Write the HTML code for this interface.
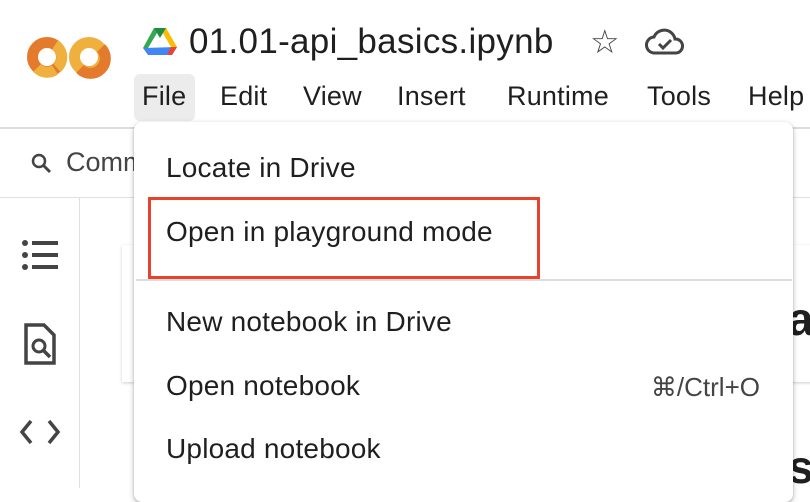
<!DOCTYPE html>
<html><head><meta charset="utf-8"><style>
body{margin:0;width:810px;height:488px;overflow:hidden;background:#fff;font-family:"Liberation Sans",sans-serif;color:#1f1f1f;position:relative}
.a{position:absolute;white-space:nowrap}
.menu{position:absolute;left:134px;top:122px;width:659px;height:380px;background:#fff;border-radius:8px;box-shadow:0 2px 6px rgba(0,0,0,.25),0 1px 2px rgba(0,0,0,.15)}
.mi{position:absolute;left:32px;font-size:28px;color:#1f1f1f;letter-spacing:0.2px}
.mn{position:absolute;top:81px;font-size:27px;letter-spacing:0.2px}
</style></head><body>
<svg class="a" style="left:24px;top:34px" width="88" height="48" viewBox="0 0 88 48">
<circle cx="23" cy="23" r="14.5" fill="none" stroke="#e37a2c" stroke-width="11"/>
<path d="M31 11A14.5 14.5 0 0 1 33 34" fill="none" stroke="#f0b03d" stroke-width="11"/>
<path d="M31 36A14.5 14.5 0 0 1 13 34" fill="none" stroke="#f0b03d" stroke-width="11"/>
<circle cx="65" cy="23" r="14.5" fill="none" stroke="#f0b03d" stroke-width="11"/>
<path d="M77 14A14.5 14.5 0 0 1 56 35" fill="none" stroke="#e37a2c" stroke-width="11"/>
</svg>
<svg class="a" style="left:143px;top:28px" width="34" height="28" viewBox="0 0 34 28">
<polygon points="11,0 17,0 5,20 0,20" fill="#34a853"/>
<polygon points="17,0 23,0 34,19 28,19" fill="#fbbc04"/>
<polygon points="11,0 23,0 17,10" fill="#1e8e3e"/>
<polygon points="0,20 34,19 29,27 5,27" fill="#4285f4"/>
<polygon points="28,19 34,19 29,27 24,27" fill="#ea4335"/>
</svg>
<div class="a" style="left:189px;top:22px;font-size:35px;letter-spacing:0.3px;color:#1f1f1f">01.01-api_basics.ipynb</div>
<div class="a" style="left:590px;top:22px;font-size:33px;color:#444">☆</div>
<svg class="a" style="left:645px;top:28px" width="40" height="28" viewBox="0 0 40 28"><path d="M10 25a8 8 0 0 1-1-16 11 11 0 0 1 21 2 7 7 0 0 1 1 14z" fill="none" stroke="#444" stroke-width="3"/><path d="M14 16l4 4 8-8" fill="none" stroke="#444" stroke-width="3"/></svg>
<div class="a" style="left:134px;top:74px;width:61px;height:47px;background:#ececec;border-radius:6px"></div>
<div class="mn" style="left:142px">File</div>
<div class="mn" style="left:220px">Edit</div>
<div class="mn" style="left:303px">View</div>
<div class="mn" style="left:397px">Insert</div>
<div class="mn" style="left:507px">Runtime</div>
<div class="mn" style="left:647px">Tools</div>
<div class="mn" style="left:748px">Help</div>
<div class="a" style="left:0;top:127px;width:810px;height:2px;background:#dcdcdc"></div>
<div class="a" style="left:0;top:197px;width:810px;height:1px;background:#e0e0e0"></div>
<svg class="a" style="left:30px;top:152px" width="24" height="24" viewBox="0 0 24 24"><circle cx="9" cy="9" r="6" fill="none" stroke="#444" stroke-width="2.5"/><path d="M13.5 13.5L20 20" stroke="#444" stroke-width="3"/></svg>
<div class="a" style="left:66px;top:147px;font-size:27px;color:#444">Comm</div>
<div class="a" style="left:79px;top:197px;width:1px;height:291px;background:#e0e0e0"></div>
<svg class="a" style="left:20px;top:238px" width="40" height="36" viewBox="0 0 40 36"><g fill="#444"><circle cx="5" cy="5" r="3"/><circle cx="5" cy="17" r="3"/><circle cx="5" cy="29" r="3"/><rect x="12" y="3" width="26" height="4"/><rect x="12" y="15" width="26" height="4"/><rect x="12" y="27" width="26" height="4"/></g></svg>
<svg class="a" style="left:22px;top:322px" width="36" height="44" viewBox="0 0 36 44"><path d="M4 3h18l10 10v28H4z" fill="none" stroke="#444" stroke-width="3.5"/><circle cx="17" cy="24" r="6" fill="none" stroke="#444" stroke-width="3"/><path d="M21 28l7 7" stroke="#444" stroke-width="3.5"/></svg>
<svg class="a" style="left:19px;top:418px" width="42" height="28" viewBox="0 0 42 28"><path d="M12 3L3 14l9 11M30 3l9 11-9 11" fill="none" stroke="#444" stroke-width="3.5"/></svg>
<div class="a" style="left:122px;top:245px;width:700px;height:137px;background:#fff;box-shadow:0 1px 3px rgba(0,0,0,.2)"></div>
<div class="a" style="left:788px;top:292px;font-size:46px;font-weight:bold;color:#1f1f1f">as</div>
<div class="a" style="left:788px;top:440px;font-size:46px;font-weight:bold;color:#1f1f1f">s</div>
<div class="menu">
<div class="mi" style="top:30px">Locate in Drive</div>
<div class="a" style="left:14px;top:75px;width:386px;height:76px;border:3px solid #e8432a"></div>
<div class="mi" style="top:94px">Open in playground mode</div>
<div class="a" style="left:2px;top:157px;width:656px;height:2px;background:#dcdcdc"></div>
<div class="mi" style="top:184px">New notebook in Drive</div>
<div class="mi" style="top:248px">Open notebook</div>
<div class="a" style="right:33px;top:250px;font-size:26px;color:#444">⌘/Ctrl+O</div>
<div class="mi" style="top:311px">Upload notebook</div>
</div>
</body></html>
